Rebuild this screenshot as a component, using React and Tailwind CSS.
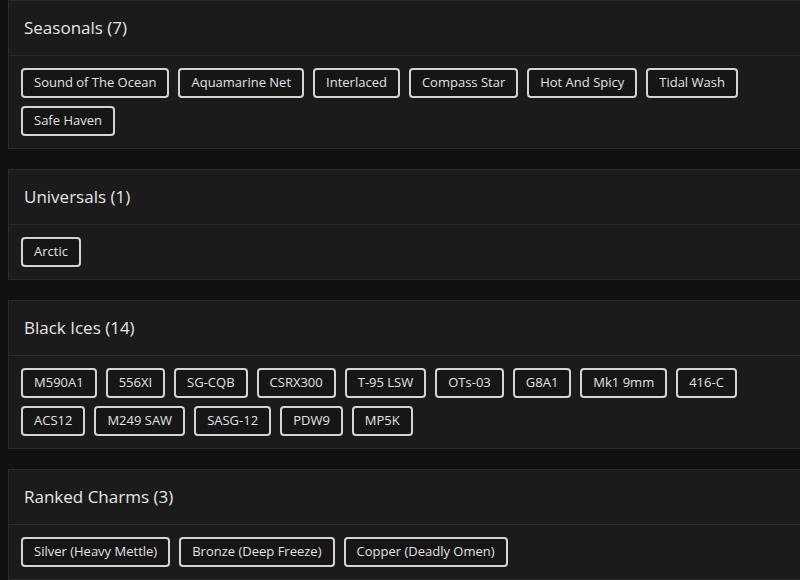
import React from 'react';

const sections = [
  {
    title: 'Seasonals (7)',
    items: ['Sound of The Ocean', 'Aquamarine Net', 'Interlaced', 'Compass Star', 'Hot And Spicy', 'Tidal Wash', 'Safe Haven'],
  },
  { title: 'Universals (1)', items: ['Arctic'] },
  {
    title: 'Black Ices (14)',
    items: ['M590A1', '556XI', 'SG-CQB', 'CSRX300', 'T-95 LSW', 'OTs-03', 'G8A1', 'Mk1 9mm', '416-C', 'ACS12', 'M249 SAW', 'SASG-12', 'PDW9', 'MP5K'],
  },
  { title: 'Ranked Charms (3)', items: ['Silver (Heavy Mettle)', 'Bronze (Deep Freeze)', 'Copper (Deadly Omen)'] },
];

const Section = ({ title, items }) => (
  <div className="bg-[#1b1b1b] border border-[#2b2b2b] w-[800px]">
    <div className="h-[55px] flex items-center px-[15px] border-b border-[#2b2b2b]">
      <h2 className="text-[17px] font-medium text-[#e6e6e6]">{title}</h2>
    </div>
    <div className="px-[12px] py-[12px] flex flex-wrap gap-x-[9px] gap-y-[8px]">
      {items.map((item) => (
        <span
          key={item}
          className="h-[30px] flex items-center px-[11px] border-2 border-[#d4d4d4] rounded-[4px] bg-[#161616] text-[13px] text-[#e2e2e2]"
        >
          {item}
        </span>
      ))}
    </div>
  </div>
);

export default function App() {
  return (
    <div className="min-h-[580px] bg-[#111111] pl-[8px] flex flex-col gap-[20px] overflow-hidden" style={{ fontFamily: '"Open Sans", sans-serif' }}>
      {sections.map((s) => (
        <Section key={s.title} {...s} />
      ))}
    </div>
  );
}
